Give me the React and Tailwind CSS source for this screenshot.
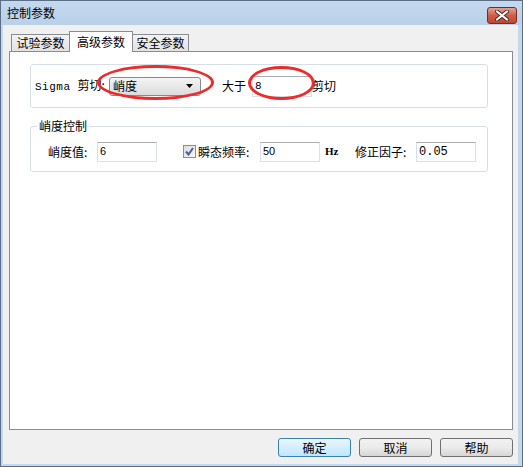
const cjk = "font-['Noto_Sans_CJK_SC',sans-serif]";
const mono = "font-['Liberation_Mono','DejaVu_Sans_Mono',monospace]";

function TextBox({ value, className = "", valueClass = "" }) {
  return (
    <div
      className={`h-[20px] w-[60px] bg-white border border-[#dbdfe6] border-t-[#abadb3] flex items-center pl-[2px] text-[11px] text-black ${className}`}
    >
      <span className={valueClass}>{value}</span>
    </div>
  );
}

function Tab({ label, active, className = "" }) {
  return active ? (
    <div
      className={`relative z-10 -ml-px h-[21px] bg-white border border-b-0 border-[#898c95] flex items-start justify-center pt-[1px] text-[12px] ${className}`}
    >
      {label}
    </div>
  ) : (
    <div
      className={`-ml-px h-[18px] bg-gradient-to-b from-[#f3f3f3] to-[#e2e2e2] border border-[#898c95] flex items-center justify-center text-[12px] leading-none ${className}`}
    >
      {label}
    </div>
  );
}

function Button({ label, primary }) {
  return (
    <div
      className={`h-[19px] w-[73px] rounded-[3px] border flex items-center justify-center text-[12px] leading-none ${
        primary
          ? "border-[#3c7fb1] bg-gradient-to-b from-[#eaf6fd] to-[#bee6fd]"
          : "border-[#707070] bg-gradient-to-b from-[#f2f2f2] via-[#ebebeb] to-[#d6d6d6]"
      }`}
    >
      {label}
    </div>
  );
}

export default function App() {
  return (
    <div className={`w-[523px] h-[467px] flex flex-col bg-[#c3d8ee] border border-[#5a6f86] text-black ${cjk}`}>
      {/* Title bar */}
      <div className="h-[24px] shrink-0 flex items-center justify-between bg-gradient-to-b from-[#c4d9ef] to-[#b9d0e9] pl-[6px] pr-[5px]">
        <span className="text-[12px] leading-none">控制参数</span>
        <div className="mt-[4px] h-[17px] w-[30px] rounded-[3px] border border-[#7a2a20] bg-gradient-to-b from-[#e5a293] via-[#cf5d49] to-[#c2452f] flex items-center justify-center">
          <svg width="14" height="11" viewBox="0 0 14 11">
            <path d="M2 1.5 L12 9.5 M12 1.5 L2 9.5" stroke="#4a2a26" strokeWidth="4" strokeLinecap="round" />
            <path d="M2 1.5 L12 9.5 M12 1.5 L2 9.5" stroke="#ffffff" strokeWidth="2.2" strokeLinecap="round" />
          </svg>
        </div>
      </div>

      {/* Body */}
      <div className="flex-1 ml-[2px] mr-[4px] mb-[2px] bg-[#f0f0f0] pl-[6px] pt-[6px] flex flex-col">
        <div className="flex items-end h-[21px] pl-[3px]">
          <Tab label="试验参数" className="w-[59px]" />
          <Tab label="高级参数" active className="w-[64px]" />
          <Tab label="安全参数" className="w-[57px]" />
        </div>

        {/* Panel */}
        <div className="-mt-px w-[504px] h-[379px] bg-white border border-[#898c95] pl-[20px] pt-[12px]">
          {/* Sigma group */}
          <div className="relative w-[458px] h-[44px] border border-[#d5dfe5] rounded-[3px] flex items-center pl-[4px]">
            <span className={`w-[74px] text-[11px] tracking-[0.5px] ${mono} leading-none`}>
              Sigma <span className={`${cjk} text-[12px] tracking-normal`}>剪切:</span>
            </span>
            <div className="h-[19px] w-[92px] rounded-[3px] border border-[#8a8a8a] bg-gradient-to-b from-[#f4f4f4] to-[#dcdcdc] flex items-center justify-between pl-[3px] pr-[6px]">
              <span className="text-[12px] leading-none">峭度</span>
              <svg width="8" height="4" viewBox="0 0 8 4">
                <path d="M0 0 H7 L3.5 4 Z" fill="#000" />
              </svg>
            </div>
            <span className="ml-[21px] text-[12px] leading-none">大于</span>
            <TextBox value="8" className="ml-[6px] h-[21px] items-start pt-[1px]" valueClass={`${mono} text-[11px]`} />
            <span className="text-[12px] leading-none">剪切</span>

            {/* annotations */}
            <div className="absolute left-[66px] top-[0px] w-[117px] h-[35px] rounded-[50%] border-[3px] border-[#ec2b2b]" />
            <div className="absolute left-[217px] top-[1px] w-[67px] h-[34px] rounded-[50%] border-[3px] border-[#ec2b2b]" />
          </div>

          {/* Kurtosis group */}
          <div className="relative mt-[18px] w-[458px] h-[46px] border border-[#d5dfe5] rounded-[3px] flex items-center pl-[17px] pt-[5px]">
            <span className="absolute -top-[9px] left-[6px] bg-white px-[2px] text-[12px] leading-[16px]">峭度控制</span>
            <span className="w-[49px] text-[12px] leading-none">峭度值:</span>
            <TextBox value="6" valueClass="font-['Liberation_Sans',sans-serif]" />
            <div className="ml-[26px] h-[13px] w-[13px] border border-[#8f8f8f] bg-gradient-to-br from-[#dcdcdc] to-[#f8f8f8] flex items-center justify-center">
              <svg width="9" height="9" viewBox="0 0 9 9">
                <path d="M1 4.5 L3.5 7.5 L8 1" stroke="#4a5f97" strokeWidth="2" fill="none" />
              </svg>
            </div>
            <span className="ml-[2px] w-[62px] text-[12px] leading-none">瞬态频率:</span>
            <TextBox value="50" valueClass="font-['Liberation_Sans',sans-serif]" />
            <span className={`ml-[5px] w-[30px] text-[11px] font-bold font-['Liberation_Serif',serif] leading-none`}>Hz</span>
            <span className="w-[61px] text-[12px] leading-none">修正因子:</span>
            <TextBox value="0.05" valueClass={`${mono} text-[12px]`} />
          </div>
        </div>

        {/* Buttons */}
        <div className="mt-[8px] w-[504px] flex justify-end gap-[8px]">
          <Button label="确定" primary />
          <Button label="取消" />
          <Button label="帮助" />
        </div>
      </div>
    </div>
  );
}
